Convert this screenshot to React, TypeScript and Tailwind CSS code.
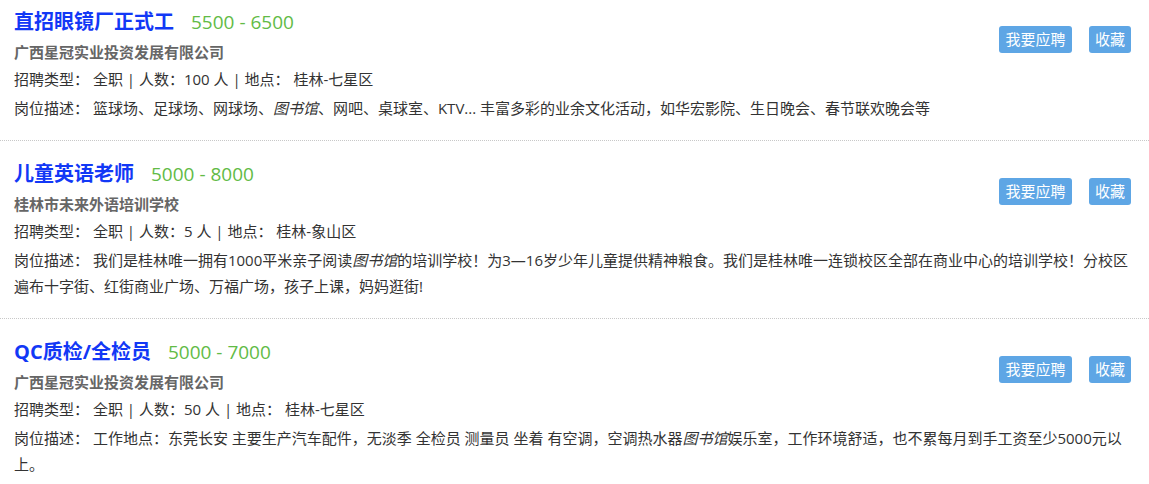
import React, { FC } from "react";

interface Job {
  title: string;
  salary: string;
  company: string;
  type: string;
  count: string;
  place: string;
  desc: React.ReactNode;
}

const jobs: Job[] = [
  {
    title: "直招眼镜厂正式工",
    salary: "5500 - 6500",
    company: "广西星冠实业投资发展有限公司",
    type: "全职",
    count: "100",
    place: "桂林-七星区",
    desc: (
      <>
        篮球场、足球场、网球场、<em>图书馆</em>、网吧、桌球室、KTV... 丰富多彩的业余文化活动，如华宏影院、生日晚会、春节联欢晚会等
      </>
    ),
  },
  {
    title: "儿童英语老师",
    salary: "5000 - 8000",
    company: "桂林市未来外语培训学校",
    type: "全职",
    count: "5",
    place: "桂林-象山区",
    desc: (
      <>
        我们是桂林唯一拥有1000平米亲子阅读<em>图书馆</em>的培训学校！为3—16岁少年儿童提供精神粮食。我们是桂林唯一连锁校区全部在商业中心的培训学校！分校区
        <br />
        遍布十字街、红街商业广场、万福广场，孩子上课，妈妈逛街!
      </>
    ),
  },
  {
    title: "QC质检/全检员",
    salary: "5000 - 7000",
    company: "广西星冠实业投资发展有限公司",
    type: "全职",
    count: "50",
    place: "桂林-七星区",
    desc: (
      <>
        工作地点：东莞长安 主要生产汽车配件，无淡季 全检员 测量员 坐着 有空调，空调热水器<em>图书馆</em>娱乐室，工作环境舒适，也不累每月到手工资至少5000元以
        <br />
        上。
      </>
    ),
  },
];

const JobItem: FC<{ job: Job; first: boolean }> = ({ job, first }) => {
  return (
    <div
      className={`border-b border-dotted border-[#c8c8c8] pl-[14px] pr-[9px] pb-[19px] ${
        first ? "pt-[7px]" : "pt-[18px]"
      }`}
    >
      <div className="float-right mt-[19px] mr-[9px] flex gap-x-[17px]">
        <button className="w-[73px] h-[27px] rounded-[3px] bg-[#5ea6e5] text-white text-[15px] leading-[27px] text-center">
          我要应聘
        </button>
        <button className="w-[42px] h-[27px] rounded-[3px] bg-[#5ea6e5] text-white text-[15px] leading-[27px] text-center">
          收藏
        </button>
      </div>
      <div className="leading-[30px] h-[30px]">
        <span className="text-[20px] font-bold text-[#1238f6]">{job.title}</span>
        <span className="ml-[17px] text-[19px] text-[#62bb46]">{job.salary}</span>
      </div>
      <p className="mt-[2px] text-[15px] leading-[26px] font-bold text-[#666]">{job.company}</p>
      <p className="mt-[1px] text-[15px] leading-[26px] text-[#333]">
        招聘类型： 全职 | 人数：{job.count} 人 | 地点： {job.place}
      </p>
      <p className="mt-[3px] text-[15px] leading-[26px] text-[#333]">
        岗位描述： {job.desc}
      </p>
    </div>
  );
};

const App: FC = () => {
  return (
    <div
      className="w-[1149px] bg-white"
      style={{ fontFamily: '"Open Sans", "Noto Sans CJK SC", sans-serif' }}
    >
      {jobs.map((job, i) => (
        <JobItem key={job.title} job={job} first={i === 0} />
      ))}
    </div>
  );
};

export default App;
